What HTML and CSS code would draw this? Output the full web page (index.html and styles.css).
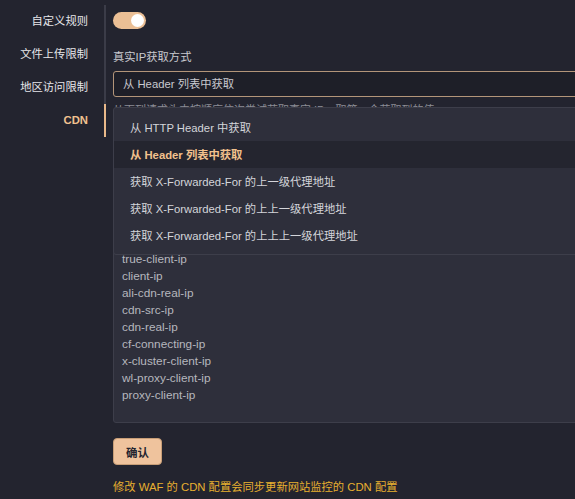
FILE: index.html
```html
<!DOCTYPE html>
<html lang="zh-CN">
<head>
    <meta charset="UTF-8">
    <meta name="viewport" content="width=device-width, initial-scale=1.0">
    <title>CDN 配置</title>
    <link rel="stylesheet" href="styles.css">
</head>
<body>
    <div class="layout">
        <nav class="side-nav">
            <a href="#rules">自定义规则</a>
            <a href="#upload">文件上传限制</a>
            <a href="#region">地区访问限制</a>
            <a href="#cdn" class="active">CDN</a>
        </nav>

        <main class="content">
            <div class="switch on"><span class="knob"></span></div>

            <label class="field-label">真实IP获取方式</label>
            <div class="select-wrap">
                <div class="select">从 Header 列表中获取</div>
                <p class="help">从下列请求头中按顺序依次尝试获取真实 IP，取第一个获取到的值</p>

                <ul class="dropdown">
                    <li>从 HTTP Header 中获取</li>
                    <li class="selected">从 Header 列表中获取</li>
                    <li>获取 X-Forwarded-For 的上一级代理地址</li>
                    <li>获取 X-Forwarded-For 的上上一级代理地址</li>
                    <li>获取 X-Forwarded-For 的上上上一级代理地址</li>
                </ul>
            </div>

            <div class="header-list">
                <div>x-forwarded-for</div>
                <div>x-real-ip</div>
                <div>x-client-ip</div>
                <div>x-original-forwarded-for</div>
                <div>forwarded</div>
                <div>forwarded-for</div>
                <div>x-forwarded</div>
                <div>true-client-ip</div>
                <div>client-ip</div>
                <div>ali-cdn-real-ip</div>
                <div>cdn-src-ip</div>
                <div>cdn-real-ip</div>
                <div>cf-connecting-ip</div>
                <div>x-cluster-client-ip</div>
                <div>wl-proxy-client-ip</div>
                <div>proxy-client-ip</div>
            </div>

            <button class="btn-confirm">确认</button>

            <p class="note">修改 WAF 的 CDN 配置会同步更新网站监控的 CDN 配置</p>
        </main>
    </div>
</body>
</html>
```

FILE: styles.css
```css
body {
    margin: 0;
    background-color: #23242f;
    color: #c9cad0;
    font-family: "Liberation Sans", "Noto Sans CJK SC", sans-serif;
    font-size: 11.3px;
    overflow: hidden;
}
.layout {
    display: flex;
    align-items: flex-start;
}
.side-nav {
    display: flex;
    flex-direction: column;
    width: 106px;
    flex-shrink: 0;
    padding-top: 5px;
}
.side-nav a {
    height: 33px;
    line-height: 33px;
    padding-right: 16px;
    text-align: right;
    color: #e6e6ea;
    text-decoration: none;
    border-right: 2px solid #3b3c48;
}
.side-nav a.active {
    color: #f0c18f;
    font-weight: bold;
    border-right-color: #e9b98a;
}
.content {
    flex-shrink: 0;
    width: 620px;
    padding: 12px 0 0 7px;
}
.switch {
    width: 33px;
    height: 17px;
    border-radius: 9px;
    background-color: #ebbf95;
    position: relative;
}
.switch .knob {
    position: absolute;
    right: 2px;
    top: 2px;
    width: 13px;
    height: 13px;
    border-radius: 50%;
    background-color: #fff;
}
.field-label {
    display: block;
    margin-top: 20px;
    line-height: 16px;
    color: #c9cad0;
}
.select-wrap {
    position: relative;
    margin-top: 6px;
}
.select {
    height: 24px;
    line-height: 25px;
    padding-left: 9px;
    border: 1px solid #b39579;
    border-radius: 3px;
    background-color: #1e1f28;
    color: #c9cad0;
}
.help {
    margin: 5px 0 0;
    font-size: 11px;
    line-height: 17px;
    color: #8c8d96;
}
.dropdown {
    position: absolute;
    left: 0;
    right: 0;
    top: 36px;
    margin: 0;
    padding: 6px 0 5px;
    list-style: none;
    background-color: #2e2f3b;
    border: 1px solid #3d3e4a;
    border-radius: 3px;
    z-index: 2;
}
.dropdown li {
    height: 27px;
    line-height: 28px;
    padding-left: 16px;
    color: #d4d5da;
}
.dropdown li.selected {
    background-color: #24252f;
    color: #f2c18d;
    font-weight: bold;
}
.header-list {
    margin-top: 4px;
    height: 275px;
    padding: 5px 8px 18px;
    background-color: #2e2f3b;
    border: 1px solid #3d3e4a;
    border-radius: 3px;
    font-size: 11.8px;
    line-height: 17px;
    color: #b6b7be;
    display: flex;
    flex-direction: column;
    justify-content: flex-end;
    overflow: hidden;
}
.btn-confirm {
    display: block;
    margin-top: 15px;
    width: 49px;
    height: 27px;
    padding: 0;
    border: 1px solid #c89e77;
    border-radius: 4px;
    background-color: #efc39d;
    color: #23242f;
    font-family: inherit;
    font-size: 11.5px;
    font-weight: bold;
}
.note {
    margin: 14px 0 0;
    line-height: 16px;
    color: #e8b030;
}
```
